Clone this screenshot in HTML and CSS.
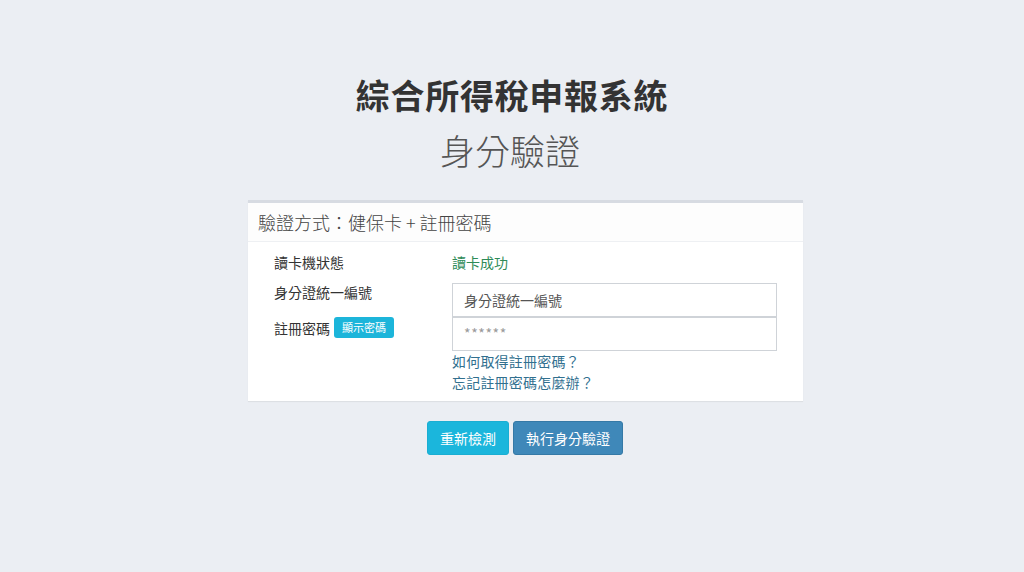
FILE: index.html
```html
<!DOCTYPE html>
<html lang="zh-Hant">
<head>
<meta charset="utf-8">
<link rel="stylesheet" href="styles.css">
</head>
<body>
<main class="page">
  <h1 class="title">綜合所得稅申報系統</h1>
  <h2 class="subtitle">身分驗證</h2>
  <section class="card">
    <div class="card-head">驗證方式：健保卡 + 註冊密碼</div>
    <div class="card-body">
      <div class="labels">
        <div class="label">讀卡機狀態</div>
        <div class="label">身分證統一編號</div>
        <div class="label">註冊密碼<span class="btn-xs">顯示密碼</span></div>
      </div>
      <div class="fields">
        <div class="status">讀卡成功</div>
        <div class="input placeholder">身分證統一編號</div>
        <div class="input stars">******</div>
        <a class="link">如何取得註冊密碼？</a>
        <a class="link">忘記註冊密碼怎麼辦？</a>
      </div>
    </div>
  </section>
  <div class="actions">
    <button class="btn btn-info">重新檢測</button>
    <button class="btn btn-primary">執行身分驗證</button>
  </div>
</main>
</body>
</html>
```
FILE: styles.css
```css
html, body { margin: 0; padding: 0; }
body {
  background: #ebeef3;
  font-family: "Noto Sans CJK TC", "Noto Sans", sans-serif;
  color: #333;
  width: 1024px;
  height: 572px;
  overflow: hidden;
}
.page {
  display: flex;
  flex-direction: column;
  align-items: center;
  padding-top: 73px;
}
.title {
  margin: 0;
  font-size: 34px;
  font-weight: 700;
  line-height: 44px;
  color: #333;
  letter-spacing: 0.7px;
}
.subtitle {
  margin: 11px 4px 0 0;
  font-size: 35px;
  font-weight: 300;
  line-height: 44px;
  color: #555;
}
.card {
  margin-top: 28px;
  margin-left: 27px;
  width: 555px;
  background: #fff;
  border-top: 3px solid #d7dbe2;
  box-shadow: 0 1px 1px rgba(0,0,0,0.06);
}
.card-head {
  height: 38px;
  line-height: 38px;
  padding-left: 10px;
  font-size: 18px;
  font-weight: 300;
  color: #444;
  background: #fdfdfd;
  border-bottom: 1px solid #eef0f3;
}
.card-body {
  display: flex;
  padding: 10px 0 8px 26px;
}
.labels {
  width: 178px;
  display: flex;
  flex-direction: column;
}
.label {
  font-size: 14px;
  color: #333;
  line-height: 20px;
  height: 20px;
  margin-bottom: 10px;
  display: flex;
  align-items: center;
}
.label:nth-child(2) { margin-bottom: 15px; }
.label:nth-child(3) { height: 21px; }
.btn-xs {
  display: inline-block;
  margin-left: 4px;
  background: #1cb5da;
  color: #fff;
  font-size: 11px;
  line-height: 21px;
  padding: 0 8px;
  border-radius: 3px;
}
.fields {
  width: 325px;
  display: flex;
  flex-direction: column;
}
.status {
  font-size: 14px;
  color: #2e8b57;
  line-height: 20px;
  margin-bottom: 11px;
}
.input {
  box-sizing: border-box;
  height: 34px;
  line-height: 32px;
  border: 1px solid #cfd3d8;
  padding-left: 11px;
  font-size: 14px;
  background: #fff;
}
.placeholder { color: #555; }
.stars { color: #999; font-size: 14px; letter-spacing: 0.6px; line-height: 30px; }
.link {
  font-size: 14px;
  color: #31708f;
  line-height: 21px;
  letter-spacing: 0.2px;
}
.actions {
  margin-top: 20px;
  margin-left: 26px;
  display: flex;
  gap: 4px;
}
.btn {
  font-family: inherit;
  font-size: 14px;
  color: #fff;
  height: 34px;
  padding: 0;
  border-radius: 3px;
  border: 1px solid transparent;
}
.btn-info { background: #1bb6dc; border-color: #1aaed2; width: 82px; }
.btn-primary { background: #3f88b9; border-color: #3579a6; width: 110px; }
```
